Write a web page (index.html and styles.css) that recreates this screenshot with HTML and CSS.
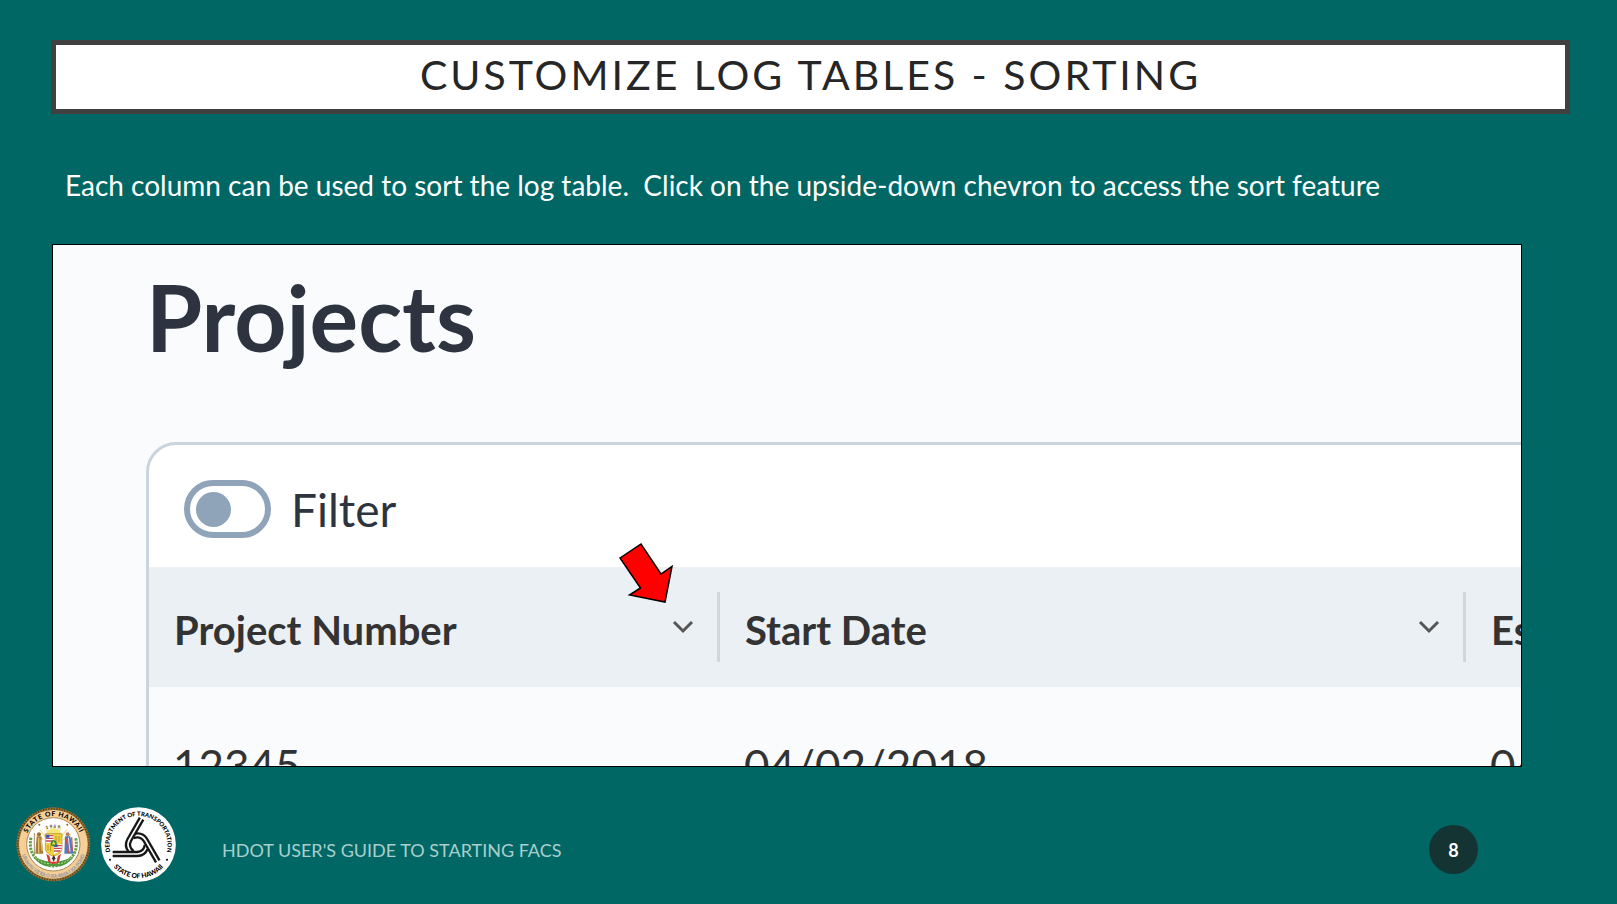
FILE: index.html
```html
<!DOCTYPE html>
<html lang="en">
<head>
<meta charset="utf-8">
<title>Customize Log Tables - Sorting</title>
<link rel="stylesheet" href="styles.css">
</head>
<body>
<main class="slide">
  <h1 class="title">CUSTOMIZE LOG TABLES - SORTING</h1>
  <p class="lead">Each column can be used to sort the log table.&nbsp; Click on the upside-down chevron to access the sort feature</p>

  <section class="frame">
    <h2 class="frame-title">Projects</h2>
    <div class="card">
      <label class="filter">
        <input class="switch" type="checkbox" role="switch">
        <span>Filter</span>
      </label>
      <table class="log">
        <colgroup><col class="col-number"><col class="col-date"><col class="col-date"></colgroup>
        <thead>
          <tr>
            <th scope="col"><div class="head"><span class="head-label">Project Number</span><button class="sort" type="button" aria-label="Sort by project number"><svg viewBox="0 0 22 14"><path d="M2 2l9 9 9-9"/></svg></button></div></th>
            <th scope="col"><div class="head"><span class="head-label">Start Date</span><button class="sort" type="button" aria-label="Sort by start date"><svg viewBox="0 0 22 14"><path d="M2 2l9 9 9-9"/></svg></button></div></th>
            <th scope="col"><div class="head"><span class="head-label">Est</span></div></th>
          </tr>
        </thead>
        <tbody>
          <tr><td>12345</td><td>04/02/2018</td><td>04</td></tr>
        </tbody>
      </table>
    </div>
    <svg class="pointer" viewBox="0 0 56 62" aria-hidden="true"><path d="M2 16L23 2l20 30 11-7.500-7 35.500-35.500-7 11-7z"/></svg>
  </section>

  <footer class="footer">
    <svg class="seal" viewBox="0 0 225 225" role="img" aria-label="State of Hawaii seal">
      <defs>
        <path id="sealTop" d="M27 113a86 86 0 0 1 172 0"/>
        <path id="sealBottom" d="M13 113a99 99 0 0 0 198 0"/>
        <path id="sealYear" d="M54 90q58-54 116 0"/>
      </defs>
      <circle cx="112" cy="112" r="111" fill="#9b7433"/>
      <circle cx="112" cy="112" r="107" fill="none" stroke="#5e4420" stroke-width="6" stroke-dasharray="4 4"/>
      <circle cx="112" cy="112" r="103" fill="#f5cf97"/>
      <circle cx="112" cy="112" r="80" fill="#fff" stroke="#a98750" stroke-width="3"/>
      <g stroke="#f6e58c" stroke-width="4">
        <path d="M112 90V58M100 90L90 60M124 90l10-30M90 92L72 68M134 92l18-24M82 98L58 82M142 98l24-16"/>
      </g>
      <path d="M90 84a23 20 0 0 1 46 0z" fill="#f8e779"/>
      <path d="M45 92q-10 48 28 72 18 12 39 13 21-1 39-13 38-24 28-72" fill="none" stroke="#63a044" stroke-width="9" stroke-dasharray="7 3"/>
      <path d="M50 148q28 38 62 28 34 10 62-28-15 8-36 13-26 7-52 0-21-5-36-13z" fill="#4c9a3a"/>
      <path d="M58 152q24 22 50 17M166 152q-24 22-50 17" stroke="#d6e6b8" stroke-width="3" fill="none" stroke-dasharray="5 5"/>
      <circle cx="69" cy="82" r="6" fill="#9a6c35"/>
      <path d="M62 88h14l6 52H58z" fill="#a77b3e"/><path d="M68 92v46M75 98l4 34" stroke="#e5c16c" stroke-width="4"/>
      <path d="M55 78v64" stroke="#72552d" stroke-width="2"/>
      <circle cx="155" cy="82" r="6" fill="#b9816a"/>
      <path d="M147 88h16l10 52h-28z" fill="#557cb8"/><path d="M150 94l8 44M167 91l2 40" stroke="#d34f55" stroke-width="4"/><path d="M157 92l5 42" stroke="#e4edf8" stroke-width="3"/>
      <path d="M88 80h50v44q0 16-25 24-25-8-25-24z" fill="#f2d238" stroke="#a28a34" stroke-width="2"/>
      <path d="M89 83h23v25H89zM114 112h23v13q-1 7-23 16z" fill="#fff"/>
      <path d="M89 86h23M89 94h23M89 102h23M114 116h23M114 124h23M114 132h19" stroke="#c74758" stroke-width="4"/>
      <path d="M89 83h11v9H89zM114 112h11v8h-11z" fill="#4056a0"/>
      <path d="M120 87v18M129 87v18M96 114v17M104 114v20" stroke="#b6962c" stroke-width="3"/>
      <circle cx="113" cy="109" r="9" fill="#38863c"/><path d="M113 103l2 4h4l-3 3 1 4-4-2-4 2 1-4-3-3h4z" fill="#f6df52"/>
      <path d="M91 140q10 4 14 16l8-5 8 5q4-12 14-16l-6 25q-16 12-32 0z" fill="#d93c34"/>
      <path d="M100 143q4 4 6 12l7-6 7 6q2-8 6-12l-4 21h-18z" fill="#f4f1e8"/><path d="M113 144l5 10-5 10-5-10z" fill="#332f35"/>
      <circle cx="70" cy="53" r="3" fill="#80673f"/><circle cx="154" cy="53" r="3" fill="#80673f"/>
      <text class="seal-name"><textPath href="#sealTop" startOffset="50%">STATE OF HAWAII</textPath></text>
      <text class="seal-year"><textPath href="#sealYear" startOffset="50%">1959</textPath></text>
      <text class="seal-motto"><textPath href="#sealBottom" startOffset="50%">UA MAU KE EA O KA AINA I KA PONO</textPath></text>
    </svg>

    <svg class="seal" viewBox="0 0 225 225" role="img" aria-label="Hawaii Department of Transportation logo">
      <defs>
        <path id="dotTop" d="M36.500 156A87 87 0 1 1 188.500 156"/>
        <path id="dotBottom" d="M19 149a100 100 0 0 0 187 0"/>
        <g id="arm"><path d="M-74 22H0A22 22 0 0 0 22 0M-74 34H0A34 34 0 0 0 31 13"/></g>
      </defs>
      <circle cx="112.500" cy="112.500" r="112" fill="#fff"/>
      <g transform="translate(109 113)" fill="none" stroke="#171717" stroke-width="7">
        <use href="#arm"/><use href="#arm" transform="rotate(120)"/><use href="#arm" transform="rotate(240)"/>
      </g>
      <circle cx="27" cy="158" r="3"/><circle cx="198" cy="158" r="3"/>
      <text class="dot-name"><textPath href="#dotTop" startOffset="50%">DEPARTMENT OF TRANSPORTATION</textPath></text>
      <text class="dot-state"><textPath href="#dotBottom" startOffset="50%">STATE OF HAWAII</textPath></text>
    </svg>

    <span class="guide">HDOT USER'S GUIDE TO STARTING FACS</span>
    <span class="page-number">8</span>
  </footer>
</main>
</body>
</html>
```
FILE: styles.css
```css
* { box-sizing: border-box; }

body {
  margin: 0;
  background: #006765;
  font-family: "Gill Sans MT", "Gill Sans", Lato, sans-serif;
}

.slide {
  display: flex;
  flex-direction: column;
  min-height: 100vh;
  padding: 40px 47px 22px 51px;
}

.title {
  margin: 0;
  padding-bottom: 4px;
  border: 5px solid #404040;
  background: #fff;
  color: #262626;
  font-size: 41px;
  font-weight: 400;
  line-height: 60px;
  letter-spacing: 3px;
  text-align: center;
}

.lead {
  margin: 51px 0 39px;
  padding-left: 14px;
  color: #fff;
  font-size: 28px;
  line-height: 40px;
}

.frame {
  position: relative;
  flex: 1 1 0;
  min-height: 320px;
  margin: 0 48px 0 1px;
  padding: 24px 0 0 93px;
  overflow: hidden;
  border: 1px solid #000;
  background: #fafbfd;
  font-family: Lato, sans-serif;
}

.frame-title {
  margin: 0 0 77px;
  color: #2d3440;
  font-size: 91px;
  font-weight: 700;
  line-height: 96px;
}

.card {
  width: 2000px;
  overflow: hidden;
  border: 3px solid #c9d4de;
  border-radius: 30px;
  background: #fff;
}

.filter {
  display: flex;
  align-items: center;
  gap: 20px;
  height: 122px;
  padding: 6px 0 0 35px;
  color: #2d3440;
  font-size: 46px;
}

.switch {
  appearance: none;
  display: flex;
  align-items: center;
  width: 87px;
  height: 58px;
  margin: 0;
  padding-left: 6px;
  border: 6px solid #8fa3b9;
  border-radius: 29px;
}

.switch::before {
  content: "";
  width: 35px;
  height: 35px;
  border-radius: 50%;
  background: #8fa3b9;
}

.log {
  width: 100%;
  table-layout: fixed;
  border-collapse: collapse;
}

.col-number { width: 571px; }
.col-date { width: 746px; }

th {
  padding: 25px 0;
  background: #ebf0f4;
}

.head {
  display: flex;
  align-items: center;
  justify-content: space-between;
  height: 70px;
  padding: 0 19px 0 25px;
  border-right: 3px solid #d3d5d7;
  color: #333;
  font-size: 40px;
}

.head-label { padding-top: 6px; }

.sort {
  display: flex;
  padding: 4px;
  border: 0;
  background: none;
}

.sort svg {
  width: 22px;
  height: 14px;
  fill: none;
  stroke: #555;
  stroke-width: 3;
}

td {
  height: 156px;
  padding: 0 24px;
  background: #fafbfd;
  color: #333;
  font-size: 44px;
}

.pointer {
  position: absolute;
  top: 297px;
  left: 565px;
  width: 56px;
  height: 62px;
  fill: #f00;
  stroke: #000;
  stroke-width: 1.5;
}

.footer {
  display: flex;
  align-items: center;
  margin: 40px 92px 0 -35px;
}

.seal {
  width: 75px;
  height: 75px;
  margin-right: 10px;
}

.seal text {
  font-family: Lato, sans-serif;
  font-weight: 900;
  text-anchor: middle;
}

.seal-name { font-size: 20px; letter-spacing: 2px; }
.seal-year { font-size: 14px; letter-spacing: 3px; fill: #55503f; }
.seal-motto { font-size: 14px; fill: #dcd8d6; stroke: #948b84; stroke-width: 1; }
.dot-name { font-size: 18px; }
.dot-state { font-size: 20px; }

.guide {
  flex: 1;
  padding: 10px 0 0 36px;
  color: #a8cfce;
  font-size: 18px;
}

.page-number {
  display: grid;
  place-items: center;
  width: 49px;
  height: 49px;
  margin-top: 10px;
  border-radius: 50%;
  background: #143434;
  color: #fff;
  font-size: 18px;
  font-weight: 700;
}
```
